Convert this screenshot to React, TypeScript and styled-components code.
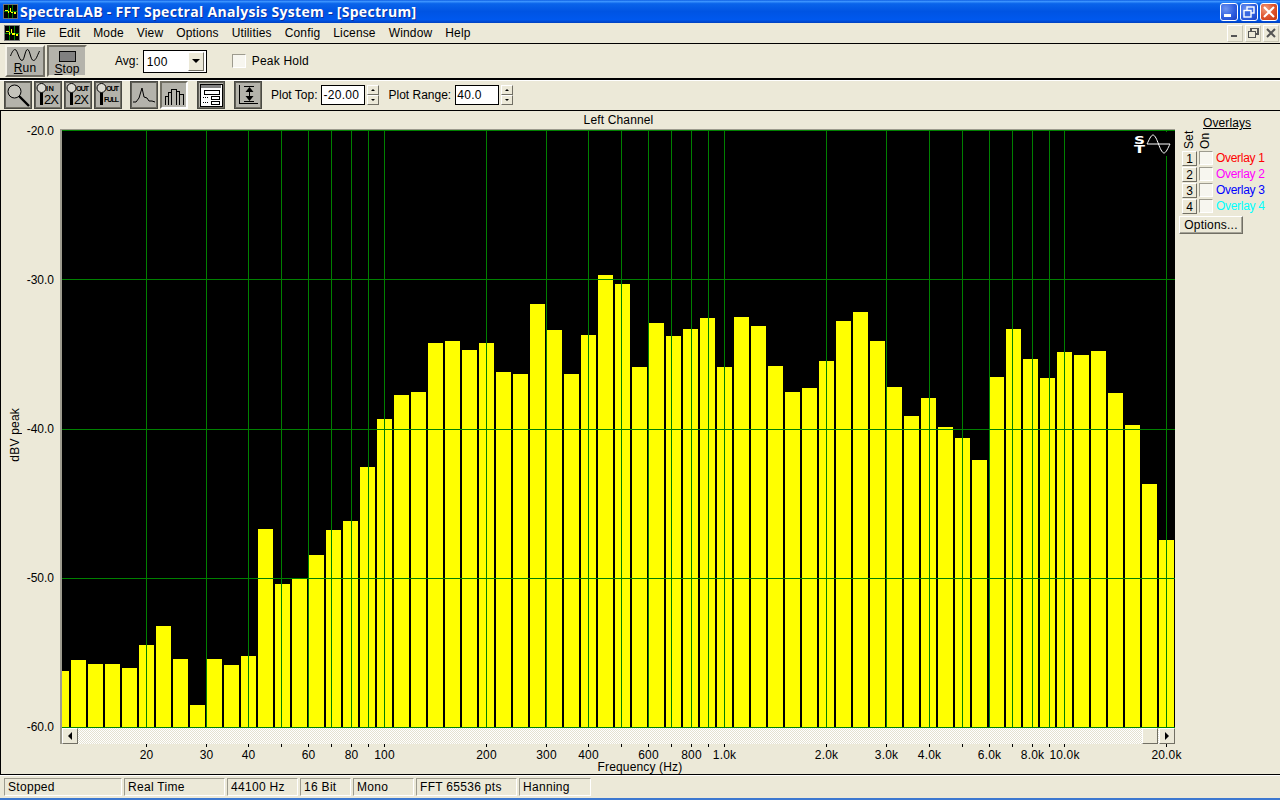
import React from "react";
import styled, { createGlobalStyle, css } from "styled-components";

const UI_FONT = `"Liberation Sans", Arial, sans-serif`;
const FACE = "#ece9d8";
const BUTTON_GRAY = "#b4b3ab";
const DARK = "#716f64";

const GlobalStyle = createGlobalStyle`
  html, body { margin: 0; padding: 0; width: 1280px; height: 800px; overflow: hidden; background: ${FACE}; }
  * { box-sizing: border-box; }
`;

const Win = styled.div`
  width: 1280px; height: 800px; display: flex; flex-direction: column; background: ${FACE};
  font: 12px/14px ${UI_FONT}; color: #000; overflow: hidden;
`;

/* ---------- title bar ---------- */
const TitleBar = styled.div`
  height: 23px; flex: none; display: flex; align-items: center; padding: 0 2px 0 3px;
  background: linear-gradient(180deg, #0a5ae0 0%, #3d95ff 6%, #0a64ea 16%, #0054e3 50%, #0058ee 85%, #0040c0 100%);
`;
const TitleText = styled.div`
  margin-left: 2px; flex: 1; color: #fff; font: bold 14px/20px "Open Sans", "DejaVu Sans", sans-serif;
  letter-spacing: 0.3px; white-space: nowrap; text-shadow: 1px 1px 0 #0b2f9c;
`;
const CaptionButtons = styled.div`display: flex; gap: 2px;`;
const CaptionButton = styled.div<{ $close?: boolean }>`
  width: 18px; height: 18px; border: 1px solid #fff; border-radius: 3px; display: flex; align-items: center; justify-content: center;
  background: ${p => p.$close
    ? "radial-gradient(circle at 30% 30%, #f0a080 0%, #e0552e 50%, #c03510 100%)"
    : "radial-gradient(circle at 30% 30%, #6f94f0 0%, #2f5fe0 55%, #1c3fc0 100%)"};
`;

/* ---------- menu ---------- */
const MenuBar = styled.div`
  height: 21px; flex: none; display: flex; align-items: center; padding: 0 1px 0 4px;
  border-bottom: 1px solid #000;
`;
const MenuList = styled.div`display: flex; flex: 1; gap: 13px; margin-left: 6px;`;
const MenuItem = styled.span`letter-spacing: 0.15px; white-space: nowrap;`;
const MdiButtons = styled.div`display: flex; gap: 2px;`;
const MdiButton = styled.div`
  width: 16px; height: 17px; display: flex; align-items: center; justify-content: center; background: ${FACE};
  border-top: 1px solid #fff; border-left: 1px solid #fff; border-bottom: 1px solid #c8c5b4; border-right: 1px solid #c8c5b4;
`;

/* ---------- run toolbar ---------- */
const RunToolbar = styled.div`
  height: 36px; flex: none; display: flex; align-items: center; padding: 0 0 0 5px; border-bottom: 2px solid #000;
`;
const BigButton = styled.div<{ $down?: boolean }>`
  width: 40px; height: 32px; display: flex; flex-direction: column; align-items: center; background: ${BUTTON_GRAY};
  ${p => p.$down
    ? css`border: 2px solid; border-color: ${DARK} ${FACE} ${FACE} ${DARK}; margin-left: 2px; padding-top: 4px;`
    : css`border: 2px solid; border-color: #f4f2e8 ${DARK} ${DARK} #f4f2e8; padding-top: 2px;`}
`;
const BigLabel = styled.span`line-height: 12px; margin-top: 1px; letter-spacing: 0.1px;`;
const Accel = styled.span`text-decoration: underline;`;
const FieldLabel = styled.span<{ $ml?: number; $ls?: number }>`
  margin-left: ${p => p.$ml ?? 0}px; letter-spacing: ${p => p.$ls ?? 0}px; white-space: nowrap;
`;
const Combo = styled.div`
  margin-left: 4px; width: 64px; height: 23px; border: 1px solid #000; background: #fff; display: flex; align-items: center;
  justify-content: space-between; padding: 0 2px 0 3px;
`;
const ComboText = styled.span`margin-top: 2px; letter-spacing: 0.3px;`;
const ComboArrow = styled.div`
  width: 16px; height: 19px; background: ${FACE}; display: flex; align-items: center; justify-content: center;
  border: 1px solid; border-color: #fff ${DARK} ${DARK} #fff;
`;
const Check = styled.div<{ $ml?: number }>`
  width: 14px; height: 14px; flex: none; margin-left: ${p => p.$ml ?? 0}px; background: #f7f6ef;
  border: 1px solid; border-color: #9d9b8e #fff #fff #9d9b8e;
`;

/* ---------- plot toolbar ---------- */
const PlotToolbar = styled.div`
  height: 31px; flex: none; display: flex; align-items: center; gap: 9px; padding: 0 0 1px 4px;
  border-top: 1px solid #fff; border-bottom: 1px solid #000;
`;
const ToolGroup = styled.div<{ $tight?: boolean }>`
  display: flex; gap: 2px; margin-right: ${p => p.$tight ? -1 : 0}px;
`;
const ToolButton = styled.div<{ $on?: boolean }>`
  width: 28px; height: 28px; background: ${BUTTON_GRAY}; border: 2px solid;
  border-color: ${p => p.$on ? `${DARK} #fff #fff ${DARK}` : `#5f5e56 ${DARK} ${DARK} #5f5e56`};
  display: flex; align-items: center; justify-content: center;
  outline: 1px solid ${p => p.$on ? "transparent" : "#4a4a44"}; outline-offset: -1px;
`;
const SpinField = styled.div`display: flex; align-items: center; gap: 4px;`;
const SpinInput = styled.div`
  width: 44px; height: 20px; border: 1px solid #000; background: #fff; padding-left: 1px; line-height: 18px; letter-spacing: 0.3px;
`;
const Spinner = styled.div`display: flex; flex-direction: column; margin-left: -2px;`;
const SpinButton = styled.div`
  width: 12px; height: 10px; background: ${FACE}; display: flex; align-items: center; justify-content: center;
  border: 1px solid; border-color: #fff ${DARK} ${DARK} #fff;
`;

/* ---------- workspace ---------- */
const Workspace = styled.div`flex: 1; display: flex; min-height: 0; border-left: 1px solid #000; border-bottom: 1px solid #000;`;
const ChartPane = styled.div`width: 1175px; flex: none; display: flex; flex-direction: column;`;
const ChannelTitle = styled.div`
  height: 19px; flex: none; text-align: center; line-height: 19px; padding-left: 60px; letter-spacing: 0.15px;
`;
const ChartBody = styled.div`flex: 1; display: flex; min-height: 0;`;
const AxisColumn = styled.div`width: 59px; flex: none; height: 598px; position: relative; display: flex; justify-content: flex-end;`;
const YTitle = styled.div`
  position: absolute; left: 7px; top: 278px; writing-mode: vertical-rl; transform: rotate(180deg); line-height: 14px; letter-spacing: 0.2px; white-space: nowrap;
`;
const YTicks = styled.div`
  height: 597px; margin-right: 6px; display: flex; flex-direction: column; justify-content: space-between; align-items: flex-end;
`;
const YTick = styled.div`height: 1px; display: flex; align-items: center; white-space: nowrap;`;
const PlotColumn = styled.div`flex: 1; display: flex; flex-direction: column; min-width: 0;`;
const PlotFrame = styled.div`
  height: 598px; flex: none; width: 1115px; border-left: 2px solid #9d9b8e; 
`;
const PlotSvg = styled.svg`display: block;`;
const PlotTopEdge = styled.div`height: 0; border-top: 1px solid #9d9b8e; margin-top: -1px; width: 1115px;`;
const ScrollBar = styled.div`
  height: 16px; width: 1115px; flex: none; display: flex; border-left: 2px solid #9d9b8e; justify-content: space-between;
  background: repeating-conic-gradient(#fff 0 25%, #e4e1d0 0 50%) 0 0 / 2px 2px;
`;
const ScrollEnd = styled.div`display: flex; gap: 1px;`;
const ScrollButton = styled.div`
  width: 16px; height: 16px; background: ${FACE}; display: flex; align-items: center; justify-content: center;
  border: 1px solid; border-color: #fff ${DARK} ${DARK} #fff;
`;
const XAxisSvg = styled.svg`
  display: block; overflow: visible; flex: none;
  font: 12px ${UI_FONT};
`;

/* ---------- overlays ---------- */
const OverlayPanel = styled.div`flex: 1; padding: 6px 0 0 3px; display: flex; flex-direction: column;`;
const OverlayTitle = styled.div`margin-left: 24px; line-height: 13px; text-decoration: underline; letter-spacing: 0.1px;`;
const OverlayHeads = styled.div`display: flex; gap: 2px; margin-left: 3px; height: 21px;`;
const VerticalHead = styled.div`
  width: 14px; height: 19px; writing-mode: vertical-rl; transform: rotate(180deg); line-height: 14px; text-align: left; letter-spacing: 0.1px;
`;
const OverlayRow = styled.div`height: 16px; display: flex; align-items: flex-start; margin-left: 3px;`;
const SetButton = styled.div`
  width: 15px; height: 15px; background: ${FACE}; border: 1px solid; border-color: #fff ${DARK} ${DARK} #fff;
  display: flex; align-items: center; justify-content: center; line-height: 12px;
`;
const OverlayName = styled.span<{ $c: string }>`margin-left: 3px; color: ${p => p.$c}; white-space: nowrap; letter-spacing: -0.3px;`;
const OptionsButton = styled.div`
  margin-top: 1px; width: 64px; height: 18px; background: ${FACE}; border: 1px solid; border-color: #fff ${DARK} ${DARK} #fff;
  box-shadow: inset -1px -1px 0 #a5a397; display: flex; align-items: center; justify-content: center; letter-spacing: 0.2px;
`;

/* ---------- status ---------- */
const StatusBar = styled.div`
  height: 23px; flex: none; display: flex; gap: 2px; padding: 2px 0 0 4px; border-top: 1px solid #fff; 
`;
const StatusCell = styled.div<{ $w: number }>`
  width: ${p => p.$w}px; height: 18px; padding-left: 3px; line-height: 16px; letter-spacing: 0.3px; white-space: nowrap;
  border: 1px solid; border-color: #9d9b8e #fff #fff #9d9b8e;
`;
const BottomEdge = styled.div`height: 2px; flex: none; background: #3c78d0;`;

/* ---------- data ---------- */
const TOPS = [671, 660, 664, 664, 668, 645, 626, 659, 705, 659, 665, 656, 529, 584, 579, 555, 530, 521, 467, 419, 395, 392, 343, 341, 350, 343, 372, 374, 304, 330, 374, 335, 275, 284, 367, 323, 336, 329, 318, 367, 317, 326, 366, 392, 388, 361, 321, 312, 341, 387, 416, 398, 427, 438, 460, 377, 329, 359, 378, 352, 355, 351, 393, 425, 484, 540];
const GRID_X = [146, 206, 248, 281, 308, 331, 351, 368, 384, 486, 546, 588, 621, 648, 671, 691, 708, 724, 826, 886, 929, 962, 989, 1012, 1032, 1049, 1064, 1166];
const GRID_Y = [130, 279, 429, 578, 727];
const X_LABELS: [number, string][] = [[146, "20"], [206, "30"], [248, "40"], [308, "60"], [351, "80"], [384, "100"], [486, "200"], [546, "300"], [588, "400"], [648, "600"], [691, "800"], [724, "1.0k"], [826, "2.0k"], [886, "3.0k"], [929, "4.0k"], [989, "6.0k"], [1032, "8.0k"], [1064, "10.0k"], [1166, "20.0k"]];
const PX = 62; // page x of the plot svg origin
const PY = 130; // page y of the plot svg origin

/* ---------- drawings ---------- */
const AppIcon = ({ size }: { size: number }) => (
  <svg width={size} height={size} viewBox="0 0 16 16" shapeRendering="crispEdges" style={{ flex: "none" }}>
    <rect width="16" height="16" fill="#000" />
    <path d="M0 .5H16M.5 0V16M15.5 0V16M0 15.5H16" stroke="#7a7a7a" />
    <path d="M5.5 1V15M10.5 1V15M1 8.5H15" stroke="#008000" />
    <path d="M2 6h3v1H2zM5 7h1v3H5zM7 4h1v4H7zM8 8h3v2H8zM12 9h2v2h-2z" fill="#ffff00" />
  </svg>
);

const WaveIcon = () => (
  <svg width="30" height="12" viewBox="0 0 30 12" fill="none" stroke="#000">
    <path d="M0.5 7 C2 3 3.5 0.5 5 0.5 C7.5 0.5 9 11.5 12 11.5 C14.5 11.5 15 0.5 17.5 0.5 C20 0.5 20.5 11.5 23.5 11.5 C26 11.5 27.5 6 29.5 2" />
  </svg>
);
const StopIcon = () => (
  <svg width="19" height="12" viewBox="0 0 19 12" shapeRendering="crispEdges">
    <rect x=".5" y=".5" width="18" height="11" fill="#808080" stroke="#000" />
  </svg>
);
const IconSvg: React.FC<{ children: React.ReactNode }> = ({ children }) => (
  <svg width="24" height="24" viewBox="0 0 24 24" fill="none" stroke="#000" style={{ fontFamily: UI_FONT }}>{children}</svg>
);
const MagnifyIcon = () => (
  <IconSvg>
    <circle cx="8.5" cy="8.5" r="6.5" fill="#c4c3bb" />
    <path d="M13 13L23 23" strokeWidth="2.4" />
  </IconSvg>
);
const ZoomIcon = ({ top, bottom, full }: { top: string; bottom: string; full?: boolean }) => (
  <IconSvg>
    <circle cx="5.5" cy="5" r="4.5" fill="#dcdbd3" />
    <path d="M5.5 10V22" strokeWidth="3" />
    <text x="10" y="8" fontSize="7.5" fontWeight="bold" fill="#000" stroke="none" textLength={top.length > 2 ? 13 : 8}>{top}</text>
    {full
      ? <text x="8" y="19" fontSize="7" fontWeight="bold" fill="#000" stroke="none" textLength="15">{bottom}</text>
      : <text x="8" y="21" fontSize="13" fill="#000" stroke="none" textLength="15">{bottom}</text>}
  </IconSvg>
);
const PeakIcon = () => (
  <IconSvg>
    <path d="M1 19H4L7 15L10 5L12 14L15 15L17 18L20 18L23 19" strokeWidth="1" />
  </IconSvg>
);
const BarsIcon = () => (
  <IconSvg>
    <path d="M3.5 21.5V13.5H6.5V21.5M6.5 13.5V9.5H9.5V21.5M9.5 9.5V6.5H14.5V21.5M14.5 6.5V8.5H17.5V21.5M17.5 11.5H21.5V21.5" strokeWidth="1" shapeRendering="crispEdges" />
  </IconSvg>
);
const DialogIcon = () => (
  <svg width="24" height="24" viewBox="0 0 24 24" shapeRendering="crispEdges">
    <rect x="1" y="1" width="22" height="22" fill="#fff" stroke="#000" />
    <rect x="2" y="2" width="20" height="3" fill="#808080" />
    <rect x="5" y="7" width="15" height="4" fill="#fff" stroke="#000" />
    <rect x="12" y="13" width="8" height="3" fill="#fff" stroke="#000" />
    <rect x="12" y="18" width="8" height="3" fill="#fff" stroke="#000" />
    <path d="M4 14h1v1H4zM6 14h1v1H6zM8 14h1v1H8zM4 19h1v1H4zM6 19h1v1H6zM8 19h1v1H8z" fill="#000" />
  </svg>
);
const RangeIcon = () => (
  <svg width="24" height="24" viewBox="0 0 24 24" shapeRendering="crispEdges">
    <path d="M3 2h1v19H3zM3 20h19v1H3zM8 3h10v1H8zM8 18h10v1H8zM13 8h1v6h-1z" fill="#000" />
    <path d="M13.5 4L9.5 9H17.5ZM13.5 18L9.5 13H17.5Z" fill="#000" shapeRendering="auto" />
  </svg>
);

const Tri = ({ dir, size = 4 }: { dir: "up" | "down" | "left" | "right"; size?: number }) => {
  const s = size;
  const pts = {
    up: `0,${s} ${s},0 ${2 * s},${s}`,
    down: `0,0 ${2 * s},0 ${s},${s}`,
    left: `${s},0 ${s},${2 * s} 0,${s}`,
    right: `0,0 0,${2 * s} ${s},${s}`,
  }[dir];
  const horiz = dir === "left" || dir === "right";
  return (
    <svg width={horiz ? s : 2 * s} height={horiz ? 2 * s : s} viewBox={`0 0 ${horiz ? s : 2 * s} ${horiz ? 2 * s : s}`}>
      <polygon points={pts} fill="#000" />
    </svg>
  );
};

const Capt = {
  Min: () => <svg width="14" height="14" viewBox="0 0 14 14"><rect x="2" y="9" width="7" height="3" fill="#fff" /></svg>,
  Max: () => <svg width="14" height="14" viewBox="0 0 14 14" fill="none" stroke="#fff" strokeWidth="1.4"><rect x="5" y="2" width="7" height="6" /><rect x="2" y="5.5" width="7" height="6.5" fill="#3a68e0" /></svg>,
  Close: () => <svg width="14" height="14" viewBox="0 0 14 14" fill="none" stroke="#fff" strokeWidth="2"><path d="M2 2L12 12M12 2L2 12" /></svg>,
};
const Mdi = {
  Min: () => <svg width="12" height="12" viewBox="0 0 12 12"><rect x="2" y="8" width="6" height="2" fill="#555" /></svg>,
  Max: () => <svg width="12" height="12" viewBox="0 0 12 12" fill="none" stroke="#555" shapeRendering="crispEdges"><path d="M4 4V1.5H11V7H8" strokeWidth="1.5" /><rect x="1.5" y="4.5" width="7" height="6" /></svg>,
  Close: () => <svg width="12" height="12" viewBox="0 0 12 12" fill="none" stroke="#555" strokeWidth="2"><path d="M2 2L10 10M10 2L2 10" /></svg>,
};

const Chart = () => (
  <PlotSvg width="1113" height="598" viewBox={`${PX} ${PY} 1113 598`} shapeRendering="crispEdges">
    <rect x={PX} y={PY} width="1113" height="598" fill="#000" />
    {TOPS.map((t, i) => {
      const x = 54 + 17 * i;
      const left = Math.max(x, PX);
      return <rect key={i} x={left} y={t} width={x + 15 - left} height={727 - t} fill="#ffff00" />;
    })}
    {GRID_X.map(x => <rect key={x} x={x} y={PY} width="1" height="598" fill="#008000" />)}
    {GRID_Y.map(y => <rect key={y} x={PX} y={y} width="1113" height="1" fill="#008000" />)}
    <rect x="1132" y="132" width="40" height="24" fill="#000" />
    <text fill="#fff" fontFamily={`"DejaVu Sans", sans-serif`} fontWeight="bold" fontSize="11" lengthAdjust="spacingAndGlyphs">
      <tspan x="1134" y="144" textLength="11" lengthAdjust="spacingAndGlyphs">S</tspan>
      <tspan x="1134" y="153" textLength="11" lengthAdjust="spacingAndGlyphs">T</tspan>
    </text>
    <path d="M1147 144 C1149 140 1151 135 1153 135 C1155 135 1157 140 1158.5 144 C1160 148 1162 153 1164 153 C1166 153 1168 148 1170 144 M1147 144H1170" fill="none" stroke="#fff" shapeRendering="auto" />
  </PlotSvg>
);

const XAxis = () => (
  <XAxisSvg width="1115" height="30" viewBox="60 744 1115 30">
    {GRID_X.map(x => <rect key={x} x={x} y={744} width="1" height="3" fill="#000" />)}
    {X_LABELS.map(([x, l]) => <text key={l} x={x + 0.5} y={759} textAnchor="middle" fill="#000" letterSpacing="0.15">{l}</text>)}
    <text x="640" y="771" textAnchor="middle" fill="#000" letterSpacing="0.15">Frequency (Hz)</text>
  </XAxisSvg>
);

const MENUS = ["File", "Edit", "Mode", "View", "Options", "Utilities", "Config", "License", "Window", "Help"];
const OVERLAYS: [string, string][] = [["Overlay 1", "#ff0000"], ["Overlay 2", "#ff00ff"], ["Overlay 3", "#0000ff"], ["Overlay 4", "#00ffff"]];
const STATUS: [string, number][] = [["Stopped", 118], ["Real Time", 101], ["44100 Hz", 71], ["16 Bit", 51], ["Mono", 61], ["FFT 65536 pts", 101], ["Hanning", 72]];

const Spin = () => (
  <Spinner>
    <SpinButton><Tri dir="up" size={2} /></SpinButton>
    <SpinButton><Tri dir="down" size={2} /></SpinButton>
  </Spinner>
);

export default function App() {
  return (
    <Win>
      <GlobalStyle />
      <TitleBar>
        <AppIcon size={15} />
        <TitleText>SpectraLAB - FFT Spectral Analysis System - [Spectrum]</TitleText>
        <CaptionButtons>
          <CaptionButton><Capt.Min /></CaptionButton>
          <CaptionButton><Capt.Max /></CaptionButton>
          <CaptionButton $close><Capt.Close /></CaptionButton>
        </CaptionButtons>
      </TitleBar>

      <MenuBar>
        <AppIcon size={16} />
        <MenuList>{MENUS.map(m => <MenuItem key={m}>{m}</MenuItem>)}</MenuList>
        <MdiButtons>
          <MdiButton><Mdi.Min /></MdiButton>
          <MdiButton><Mdi.Max /></MdiButton>
          <MdiButton><Mdi.Close /></MdiButton>
        </MdiButtons>
      </MenuBar>

      <RunToolbar>
        <BigButton><WaveIcon /><BigLabel><Accel>R</Accel>un</BigLabel></BigButton>
        <BigButton $down><StopIcon /><BigLabel><Accel>S</Accel>top</BigLabel></BigButton>
        <FieldLabel $ml={28}>Avg:</FieldLabel>
        <Combo><ComboText>100</ComboText><ComboArrow><Tri dir="down" size={4} /></ComboArrow></Combo>
        <Check $ml={25} />
        <FieldLabel $ml={6} $ls={0.2}>Peak Hold</FieldLabel>
      </RunToolbar>

      <PlotToolbar>
        <ToolGroup $tight>
          <ToolButton><MagnifyIcon /></ToolButton>
          <ToolButton><ZoomIcon top="IN" bottom="2X" /></ToolButton>
          <ToolButton><ZoomIcon top="OUT" bottom="2X" /></ToolButton>
          <ToolButton><ZoomIcon top="OUT" bottom="FULL" full /></ToolButton>
        </ToolGroup>
        <ToolGroup>
          <ToolButton><PeakIcon /></ToolButton>
          <ToolButton $on><BarsIcon /></ToolButton>
        </ToolGroup>
        <ToolButton><DialogIcon /></ToolButton>
        <ToolButton><RangeIcon /></ToolButton>
        <SpinField>
          <FieldLabel>Plot Top:</FieldLabel>
          <SpinInput>-20.00</SpinInput>
          <Spin />
        </SpinField>
        <SpinField>
          <FieldLabel>Plot Range:</FieldLabel>
          <SpinInput>40.0</SpinInput>
          <Spin />
        </SpinField>
      </PlotToolbar>

      <Workspace>
        <ChartPane>
          <ChannelTitle>Left Channel</ChannelTitle>
          <ChartBody>
            <AxisColumn>
              <YTitle>dBV peak</YTitle>
              <YTicks>
                {["-20.0", "-30.0", "-40.0", "-50.0", "-60.0"].map(l => <YTick key={l}>{l}</YTick>)}
              </YTicks>
            </AxisColumn>
            <PlotColumn>
              <PlotTopEdge />
              <PlotFrame><Chart /></PlotFrame>
              <ScrollBar>
                <ScrollButton><Tri dir="left" /></ScrollButton>
                <ScrollEnd>
                  <ScrollButton />
                  <ScrollButton><Tri dir="right" /></ScrollButton>
                </ScrollEnd>
              </ScrollBar>
              <XAxis />
            </PlotColumn>
          </ChartBody>
        </ChartPane>
        <OverlayPanel>
          <OverlayTitle>Overlays</OverlayTitle>
          <OverlayHeads>
            <VerticalHead>Set</VerticalHead>
            <VerticalHead>On</VerticalHead>
          </OverlayHeads>
          {OVERLAYS.map(([n, c], i) => (
            <OverlayRow key={n}>
              <SetButton>{i + 1}</SetButton>
              <Check $ml={2} />
              <OverlayName $c={c}>{n}</OverlayName>
            </OverlayRow>
          ))}
          <OptionsButton>Options...</OptionsButton>
        </OverlayPanel>
      </Workspace>

      <StatusBar>
        {STATUS.map(([t, w]) => <StatusCell key={t} $w={w}>{t}</StatusCell>)}
      </StatusBar>
      <BottomEdge />
    </Win>
  );
}
